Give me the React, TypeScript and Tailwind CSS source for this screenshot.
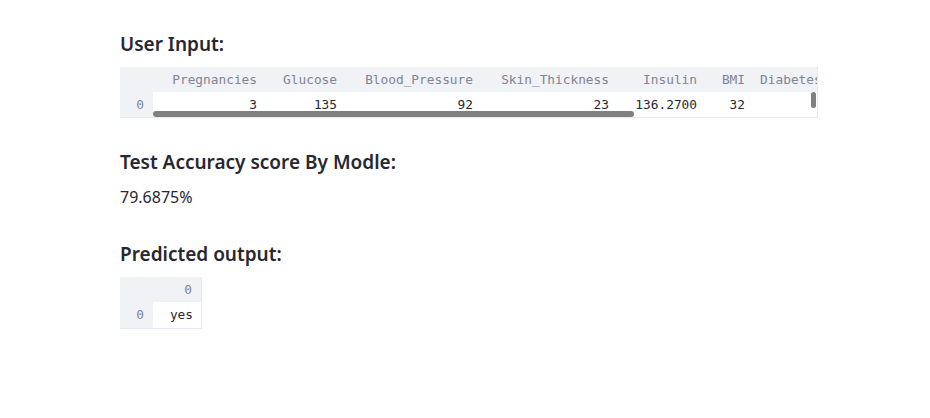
import React from "react";

const mono = { fontFamily: '"DejaVu Sans Mono", "Liberation Mono", monospace' };
const sans = { fontFamily: '"Noto Sans", Inter, sans-serif' };

const cols = [
  { name: "Pregnancies", w: 112, v: "3" },
  { name: "Glucose", w: 80, v: "135" },
  { name: "Blood_Pressure", w: 136, v: "92" },
  { name: "Skin_Thickness", w: 136, v: "23" },
  { name: "Insulin", w: 88, v: "136.2700" },
  { name: "BMI", w: 48, v: "32" },
  { name: "DiabetesPedigreeFunction", w: 200, v: "0.6260" },
];

export default function App() {
  return (
    <div className="w-[930px] h-[418px] bg-white text-[#262730]" style={sans}>
      <div className="pl-[120px] pt-[31px] w-[818px]">
        <h3 className="text-[19px] font-semibold leading-[26px] mb-[10px]">User Input:</h3>
        <div className="relative w-[698px] h-[51px] overflow-hidden bg-[#f0f2f6] border-r border-b border-[#e6e9ef]" style={mono}>
          <div className="flex h-[25px] text-[12.8px] text-[#808495] items-center whitespace-nowrap">
            <div className="w-[33px] shrink-0" />
            {cols.map((c) => (
              <div key={c.name} className="shrink-0 text-right pr-[8px] overflow-hidden" style={{ width: c.w }}>
                {c.name}
              </div>
            ))}
          </div>
          <div className="flex h-[26px] text-[12.8px] items-center whitespace-nowrap">
            <div className="w-[33px] shrink-0 h-full flex items-center justify-end pr-[9px] text-[#808495]">0</div>
            {cols.map((c) => (
              <div key={c.name} className="shrink-0 h-full flex items-center justify-end pr-[8px] bg-white text-[#262730]" style={{ width: c.w }}>
                {c.v}
              </div>
            ))}
          </div>
          <div className="absolute left-[33px] top-[44px] w-[481px] h-[6px] rounded-full bg-[#808080]" />
          <div className="absolute right-[1px] top-[25px] w-[5px] h-[16px] rounded-full bg-[#808080]" />
        </div>

        <h3 className="text-[19px] font-semibold leading-[26px] mt-[31px]">Test Accuracy score By Modle:</h3>
        <p className="text-[16px] leading-[24px] mt-[10px]">79.6875%</p>

        <h3 className="text-[19px] font-semibold leading-[26px] mt-[32px] mb-[10px]">Predicted output:</h3>
        <div className="w-[82px] bg-[#f0f2f6] border-r border-b border-[#e6e9ef] text-[12.8px]" style={mono}>
          <div className="flex h-[25px] items-center">
            <div className="w-[33px]" />
            <div className="w-[48px] text-right pr-[9px] text-[#808495]">0</div>
          </div>
          <div className="flex h-[26px]">
            <div className="w-[33px] flex items-center justify-end pr-[9px] text-[#808495]">0</div>
            <div className="w-[48px] bg-white flex items-center justify-end pr-[8px]">yes</div>
          </div>
        </div>
      </div>
    </div>
  );
}
